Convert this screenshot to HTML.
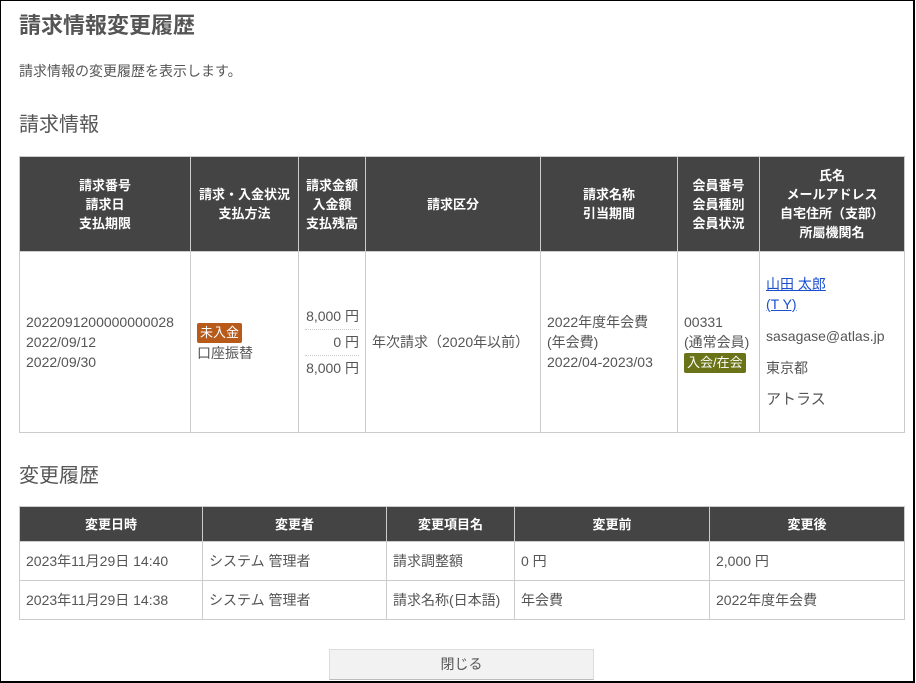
<!DOCTYPE html>
<html><head><meta charset="utf-8"><style>
*{box-sizing:border-box;margin:0;padding:0}
html,body{width:916px;height:683px;overflow:hidden;background:#fff}
body{font-family:"Liberation Sans","Noto Sans CJK JP",sans-serif;color:#555;font-size:14px;position:relative}
.frame{position:absolute;left:0;top:0;width:915px;height:683px;border-top:1px solid #000;border-left:1px solid #000;border-right:2px solid #000;border-bottom:2px solid #000}
h1{position:absolute;left:19px;top:10px;font-size:22px;font-weight:bold;color:#555;line-height:32px}
.desc{position:absolute;left:19px;top:61px;line-height:20px}
h2{position:absolute;left:19px;font-size:20px;font-weight:normal;color:#555;line-height:30px}
table{position:absolute;left:19px;width:885px;border-collapse:collapse;table-layout:fixed}
th{background:#444;color:#fff;font-weight:bold;font-size:13px;border:1px solid #ccc;text-align:center;line-height:19px}
td{border:1px solid #ccc;vertical-align:middle;line-height:20px;padding:0 6px}
.b1{background:#b85a1a;color:#fff;padding:1px 3px;border-radius:2px;display:inline-block;line-height:18px;font-size:13px}
.b2{background:#6b7319;color:#fff;padding:1px 3px;border-radius:2px;display:inline-block;line-height:18px;font-size:13px}
.amt div{text-align:right;line-height:25px;border-bottom:1px dotted #ccc}
.amt div:last-child{border-bottom:none}
a{color:#1a4fd0}
.btn{position:absolute;left:329px;top:649px;width:265px;height:31px;background:#f2f2f2;border:1px solid #ddd;border-bottom-color:#bbb;text-align:center;line-height:28px;color:#555}
</style></head><body>
<div class="frame"></div>
<h1>請求情報変更履歴</h1>
<div class="desc">請求情報の変更履歴を表示します。</div>
<h2 style="top:110px">請求情報</h2>
<table style="top:156px">
<colgroup><col style="width:171px"><col style="width:108px"><col style="width:67px"><col style="width:175px"><col style="width:137px"><col style="width:82px"><col style="width:145px"></colgroup>
<tr style="height:95px"><th>請求番号<br>請求日<br>支払期限</th><th>請求・入金状況<br>支払方法</th><th>請求金額<br>入金額<br>支払残高</th><th>請求区分</th><th>請求名称<br>引当期間</th><th>会員番号<br>会員種別<br>会員状況</th><th>氏名<br>メールアドレス<br>自宅住所（支部）<br>所屬機関名</th></tr>
<tr style="height:181px"><td>2022091200000000028<br>2022/09/12<br>2022/09/30</td><td><span class="b1">未入金</span><br>口座振替</td><td class="amt"><div>8,000 円</div><div>0 円</div><div>8,000 円</div></td><td>年次請求（2020年以前）</td><td>2022年度年会費<br>(年会費)<br>2022/04-2023/03</td><td>00331<br>(通常会員)<br><span class="b2">入会/在会</span></td><td><a href="#">山田 太郎</a><br><a href="#">(T Y)</a><div style="margin-top:12px">sasagase@atlas.jp</div><div style="margin-top:12px">東京都</div><div style="margin-top:12px;font-size:15px">アトラス</div></td></tr>
</table>
<h2 style="top:461px">変更履歴</h2>
<table style="top:506px">
<colgroup><col style="width:183px"><col style="width:184px"><col style="width:128px"><col style="width:195px"><col style="width:195px"></colgroup>
<tr style="height:35px"><th>変更日時</th><th>変更者</th><th>変更項目名</th><th>変更前</th><th>変更後</th></tr>
<tr style="height:39px"><td>2023年11月29日 14:40</td><td>システム 管理者</td><td>請求調整額</td><td>0 円</td><td>2,000 円</td></tr>
<tr style="height:39px"><td>2023年11月29日 14:38</td><td>システム 管理者</td><td>請求名称(日本語)</td><td>年会費</td><td>2022年度年会費</td></tr>
</table>
<div class="btn">閉じる</div>
</body></html>
